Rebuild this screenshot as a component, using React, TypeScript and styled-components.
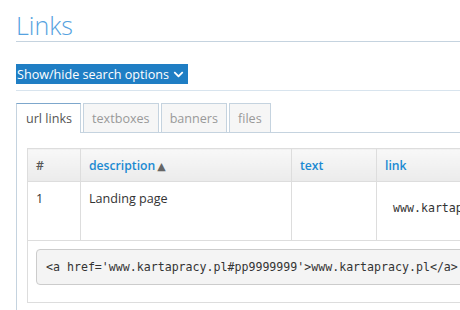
import styled, { createGlobalStyle } from "styled-components";
import { FaChevronDown } from "react-icons/fa";

const Global = createGlobalStyle`
  html, body {
    margin: 0;
    padding: 0;
    background: #fff;
    overflow: hidden;
  }
  body {
    font-family: "Open Sans", "DejaVu Sans", sans-serif;
    font-size: 12.6px;
    color: #333;
  }
`;

const tabs = ["url links", "textboxes", "banners", "files"];

const App = () => {
  return (
    <Page>
      <Global />
      <Header>
        <Title>Links</Title>
      </Header>
      <Toggle>
        Show/hide search options
        <FaChevronDown size={11} />
      </Toggle>
      <Divider />
      <TabBar>
        {tabs.map((t, i) => (
          <Tab key={t} active={i === 0}>
            {t}
          </Tab>
        ))}
      </TabBar>
      <Panel>
        <Table>
          <colgroup>
            <col style={{ width: 53 }} />
            <col style={{ width: 211 }} />
            <col style={{ width: 85 }} />
            <col style={{ width: 260 }} />
          </colgroup>
          <thead>
            <tr>
              <Th plain>#</Th>
              <Th>
                description<Arrow>▲</Arrow>
              </Th>
              <Th>text</Th>
              <Th>link</Th>
            </tr>
          </thead>
          <tbody>
            <tr>
              <Td>1</Td>
              <Td>Landing page</Td>
              <Td></Td>
              <LinkCell>www.kartapracy.pl#pp9999999</LinkCell>
            </tr>
            <tr>
              <CodeCell colSpan={4}>
                <Code>
                  {"<a href='www.kartapracy.pl#pp9999999'>www.kartapracy.pl</a>"}
                </Code>
              </CodeCell>
            </tr>
          </tbody>
        </Table>
      </Panel>
    </Page>
  );
};

export default App;

const Page = styled.div`
  width: 444px;
  padding-left: 16px;
`;

const Header = styled.div`
  padding-top: 10px;
  padding-bottom: 1px;
  border-bottom: 1px solid #c5d3df;
`;

const Title = styled.h1`
  margin: 0;
  font-size: 25px;
  line-height: 30px;
  font-weight: 300;
  color: #55a2e0;
`;

const Toggle = styled.div`
  margin-top: 22px;
  height: 20px;
  width: 172px;
  display: flex;
  align-items: center;
  gap: 4px;
  padding-left: 1px;
  box-sizing: border-box;
  background: #1f7ec4;
  color: #fff;
  font-size: 12.6px;
  white-space: nowrap;
`;

const Divider = styled.div`
  margin-top: 6px;
  border-top: 1px solid #d8e4ee;
`;

const TabBar = styled.div`
  margin-top: 11px;
  display: flex;
  align-items: flex-end;
  gap: 2px;
  border-bottom: 1px solid #c5d3df;
  height: 30px;
`;

const Tab = styled.div<{ active?: boolean }>`
  height: ${({ active }) => (active ? "30px" : "29px")};
  box-sizing: border-box;
  padding: 0 ${({ active }) => (active ? "8px 0 9px" : "8px")};
  display: flex;
  align-items: center;
  border: 1px solid #c5d3df;
  border-top-color: ${({ active }) => (active ? "#7da7cc" : "#c5d3df")};
  border-bottom: none;
  background: ${({ active }) => (active ? "#fff" : "#f6f6f6")};
  color: ${({ active }) => (active ? "#555" : "#999")};
  font-size: 12.6px;
  margin-bottom: ${({ active }) => (active ? "-1px" : "0")};
  white-space: nowrap;
`;

const Panel = styled.div`
  border-left: 1px solid #c5d3df;
  padding: 15px 0 12px 10px;
`;

const Table = styled.table`
  border-collapse: collapse;
  table-layout: fixed;
  width: 609px;
`;

const Th = styled.th<{ plain?: boolean }>`
  height: 32px;
  padding: 0 8px;
  text-align: left;
  font-weight: 600;
  font-size: 12.2px;
  color: ${({ plain }) => (plain ? "#555" : "#1b8ad2")};
  background: linear-gradient(#f8f8f8, #ebebeb);
  border: 1px solid #dddddd;
  white-space: nowrap;
`;

const Arrow = styled.span`
  color: #666;
  font-size: 11px;
  margin-left: 2px;
`;

const Td = styled.td`
  height: 50px;
  padding: 8px 8px 0;
  vertical-align: top;
  border: 1px solid #dddddd;
  font-size: 12.6px;
  color: #333;
`;

const LinkCell = styled.td`
  height: 52px;
  padding: 0 16px 6px;
  vertical-align: middle;
  border: 1px solid #dddddd;
  font-family: "DejaVu Sans Mono", "Liberation Mono", monospace;
  font-size: 11.6px;
  color: #333;
  white-space: nowrap;
  overflow: hidden;
`;

const CodeCell = styled.td`
  padding: 8px 8px 17px;
  border: 1px solid #dddddd;
`;

const Code = styled.pre`
  margin: 0;
  height: 36px;
  box-sizing: border-box;
  display: flex;
  align-items: center;
  padding: 0 9px;
  background: #f4f4f4;
  border: 1px solid #cccccc;
  border-radius: 4px;
  font-family: "DejaVu Sans Mono", "Liberation Mono", monospace;
  font-size: 11.6px;
  color: #333;
  white-space: pre;
`;
